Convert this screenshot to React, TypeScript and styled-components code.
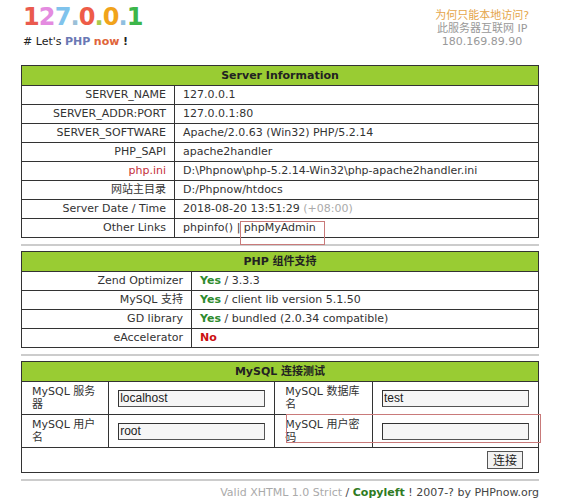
import styled, { createGlobalStyle } from "styled-components";

const GlobalStyle = createGlobalStyle`
  body {
    margin: 0;
    background: #fff;
    font-family: "DejaVu Sans", Verdana, "Noto Sans CJK SC", sans-serif;
    font-size: 11px;
    color: #333;
  }
`;

const Page = styled.div`
  position: relative;
  width: 518px;
  margin-left: 21px;
`;

const Top = styled.div`
  display: flex;
  justify-content: space-between;
  height: 65px;
`;

const Brand = styled.div`
  padding-left: 2px;
  padding-top: 2px;
`;

const Logo = styled.div`
  font-size: 24px;
  font-weight: bold;
  line-height: 30px;
  letter-spacing: -0.9px;
`;

const Digit = styled.span<{ $c: string }>`
  color: ${(p) => p.$c};
`;

const Slogan = styled.div`
  margin-top: 3px;
  color: #222;
  line-height: 14px;
`;

const Hl = styled.b<{ $c: string }>`
  color: ${(p) => p.$c};
`;

const Notice = styled.div`
  margin-top: 9px;
  margin-right: 10px;
  text-align: center;
  line-height: 13px;
  color: #999;
`;

const Why = styled.div`
  color: #e5a54a;
`;

const Table = styled.table`
  width: 100%;
  border-collapse: collapse;
  border: 1px solid #333;
`;

const Head = styled.th`
  background: #99cc33;
  color: #222;
  font-weight: bold;
  text-align: center;
  padding: 2px 0;
  line-height: 15px;
  border: 1px solid #333;
`;

const Label = styled.td<{ $w: number; $red?: boolean }>`
  width: ${(p) => p.$w}px;
  text-align: right;
  padding: 2px 8px;
  line-height: 14px;
  border: 1px solid #333;
  color: ${(p) => (p.$red ? "#c4303a" : "#333")};
  white-space: nowrap;
`;

const Value = styled.td`
  padding: 2px 8px;
  line-height: 14px;
  border: 1px solid #333;
  white-space: nowrap;
`;

const Dim = styled.span`
  color: #aaa;
`;

const Yes = styled.b`
  color: #2e8b2e;
`;

const No = styled.b`
  color: #cc1111;
`;

const Divider = styled.hr`
  border: 0;
  border-top: 2px solid #ccc;
  margin: 6px 0 5px;
`;

const FormLabel = styled.td<{ $w: number }>`
  width: ${(p) => p.$w}px;
  box-sizing: border-box;
  padding: 3px 10px;
  line-height: 13px;
  border: 1px solid #333;
  vertical-align: middle;
`;

const FormField = styled.td<{ $w?: number }>`
  ${(p) => (p.$w ? `width: ${p.$w}px;` : "")}
  box-sizing: border-box;
  padding: 3px 9px;
  border: 1px solid #333;
  vertical-align: middle;
`;

const Input = styled.input`
  box-sizing: border-box;
  width: 147px;
  height: 17px;
  margin: 0;
  padding: 0 1px;
  border: 1px solid #555;
  border-top-color: #333;
  border-left-color: #333;
  background: #f6f6f6;
  font-family: "Liberation Sans", Arial, sans-serif;
  font-size: 12px;
  color: #222;
`;

const Actions = styled.td`
  text-align: right;
  padding: 3px 15px 3px 0;
  border: 1px solid #333;
`;

const Button = styled.button`
  height: 18px;
  padding: 0 5px;
  border: 1px solid #555;
  background: #f2f2f2;
  font-family: "Noto Sans CJK SC", sans-serif;
  font-size: 12px;
  line-height: 14px;
  color: #222;
`;

const Footer = styled.div`
  margin-top: 5px;
  text-align: right;
  color: #aaa;
  line-height: 14px;
`;

const Dark = styled.span`
  color: #444;
`;

const Copy = styled.b`
  color: #2f7a22;
`;

const Mark = styled.div`
  position: absolute;
  border: 1px solid #c97a7a;
  pointer-events: none;
`;

const digits: [string, string][] = [
  ["1", "#ea5a4e"],
  ["2", "#e48be0"],
  ["7", "#80c3ec"],
  [".", "#9ac0d8"],
  ["0", "#ee5c48"],
  [".", "#a9c94c"],
  ["0", "#f1a31b"],
  [".", "#8fbfe0"],
  ["1", "#3cb64a"],
];

const serverRows: [string, React.ReactNode, boolean?][] = [
  ["SERVER_NAME", "127.0.0.1"],
  ["SERVER_ADDR:PORT", "127.0.0.1:80"],
  ["SERVER_SOFTWARE", "Apache/2.0.63 (Win32) PHP/5.2.14"],
  ["PHP_SAPI", "apache2handler"],
  ["php.ini", "D:\\Phpnow\\php-5.2.14-Win32\\php-apache2handler.ini", true],
  ["网站主目录", "D:/Phpnow/htdocs"],
  [
    "Server Date / Time",
    <>
      2018-08-20 13:51:29 <Dim>(+08:00)</Dim>
    </>,
  ],
  ["Other Links", "phpinfo() | phpMyAdmin"],
];

const phpRows: [string, React.ReactNode][] = [
  ["Zend Optimizer", <><Yes>Yes</Yes> / 3.3.3</>],
  ["MySQL 支持", <><Yes>Yes</Yes> / client lib version 5.1.50</>],
  ["GD library", <><Yes>Yes</Yes> / bundled (2.0.34 compatible)</>],
  ["eAccelerator", <No>No</No>],
];

export default function App() {
  return (
    <>
      <GlobalStyle />
      <Page>
        <Top>
          <Brand>
            <Logo>
              {digits.map(([d, c], i) => (
                <Digit key={i} $c={c}>
                  {d}
                </Digit>
              ))}
            </Logo>
            <Slogan>
              # Let's <Hl $c="#6a78b4">PHP</Hl> <Hl $c="#e0643a">now</Hl> <b>!</b>
            </Slogan>
          </Brand>
          <Notice>
            <Why>为何只能本地访问?</Why>
            <div>此服务器互联网 IP</div>
            <div>180.169.89.90</div>
          </Notice>
        </Top>

        <Table>
          <thead>
            <tr>
              <Head colSpan={2}>Server Information</Head>
            </tr>
          </thead>
          <tbody>
            {serverRows.map(([k, v, red]) => (
              <tr key={k}>
                <Label $w={136} $red={red}>
                  {k}
                </Label>
                <Value>{v}</Value>
              </tr>
            ))}
          </tbody>
        </Table>

        <Divider />

        <Table>
          <thead>
            <tr>
              <Head colSpan={2}>PHP 组件支持</Head>
            </tr>
          </thead>
          <tbody>
            {phpRows.map(([k, v]) => (
              <tr key={k}>
                <Label $w={153}>{k}</Label>
                <Value>{v}</Value>
              </tr>
            ))}
          </tbody>
        </Table>

        <Divider />

        <Table>
          <thead>
            <tr>
              <Head colSpan={4}>MySQL 连接测试</Head>
            </tr>
          </thead>
          <tbody>
            <tr>
              <FormLabel $w={88}>MySQL 服务器</FormLabel>
              <FormField $w={164}>
                <Input defaultValue="localhost" />
              </FormField>
              <FormLabel $w={99}>MySQL 数据库名</FormLabel>
              <FormField>
                <Input defaultValue="test" />
              </FormField>
            </tr>
            <tr>
              <FormLabel $w={88}>MySQL 用户名</FormLabel>
              <FormField $w={164}>
                <Input defaultValue="root" />
              </FormField>
              <FormLabel $w={99}>MySQL 用户密码</FormLabel>
              <FormField>
                <Input type="password" />
              </FormField>
            </tr>
            <tr>
              <Actions colSpan={4}>
                <Button>连接</Button>
              </Actions>
            </tr>
          </tbody>
        </Table>

        <Divider />

        <Footer>
          Valid XHTML 1.0 Strict <Dark>/</Dark> <Copy>Copyleft</Copy>{" "}
          <Dark>! 2007-? by PHPnow.org</Dark>
        </Footer>

        {/* red highlight boxes drawn over the screenshot */}
        <Mark style={{ left: 219, top: 221, width: 83, height: 22 }} />
        <Mark style={{ left: 265, top: 414, width: 253, height: 27 }} />
      </Page>
    </>
  );
}
